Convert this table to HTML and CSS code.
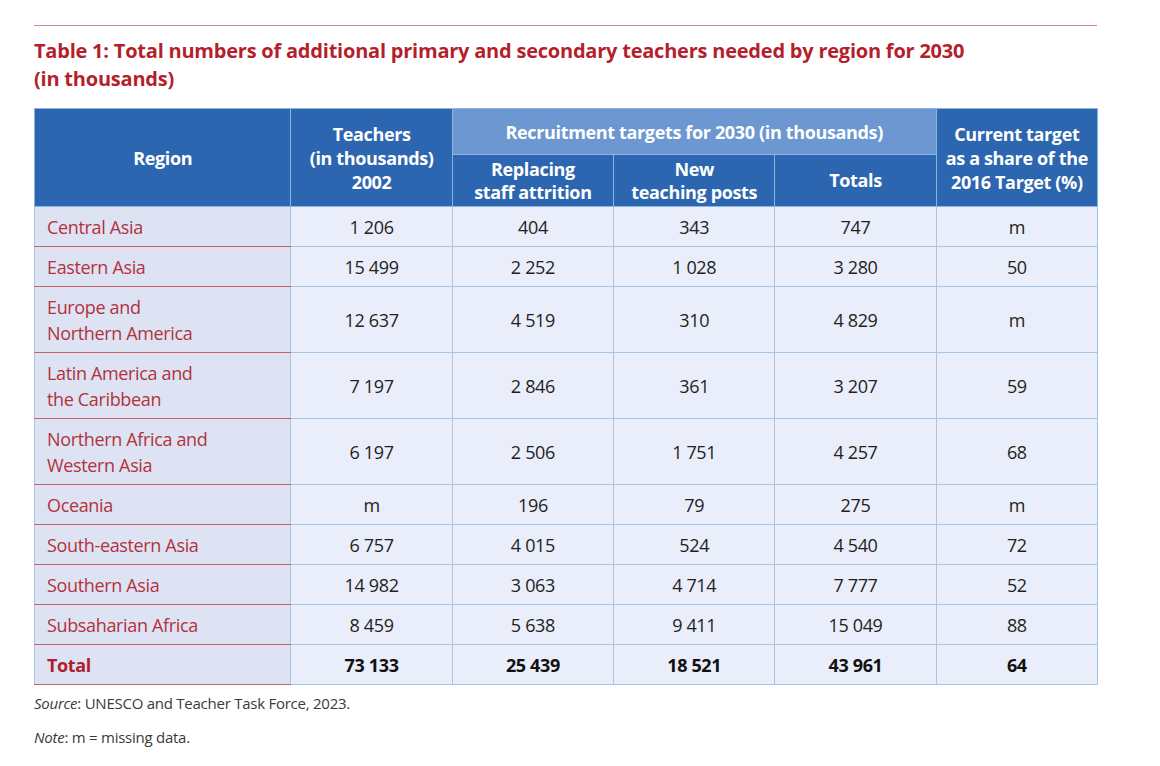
FILE: index.html
```html
<!DOCTYPE html>
<html lang="en">
<head>
<meta charset="utf-8">
<title>Table 1</title>
<link rel="stylesheet" href="styles.css">
</head>
<body>
<div class="page">
  <div class="rule"></div>
  <h1 class="title">Table 1: Total numbers of additional primary and secondary teachers needed by region for 2030<br>(in thousands)</h1>
  <table class="data">
    <colgroup>
      <col class="c-region"><col class="c-num"><col class="c-num"><col class="c-num"><col class="c-num"><col class="c-num">
    </colgroup>
    <thead>
      <tr class="h1">
        <th rowspan="2">Region</th>
        <th rowspan="2">Teachers<br>(in thousands)<br>2002</th>
        <th colspan="3" class="group">Recruitment targets for 2030 (in thousands)</th>
        <th rowspan="2">Current target<br>as a share of the<br>2016 Target (%)</th>
      </tr>
      <tr class="h2">
        <th>Replacing<br>staff attrition</th>
        <th>New<br>teaching posts</th>
        <th>Totals</th>
      </tr>
    </thead>
    <tbody>
      <tr><td class="region">Central Asia</td><td>1 206</td><td>404</td><td>343</td><td>747</td><td>m</td></tr>
      <tr><td class="region">Eastern Asia</td><td>15 499</td><td>2 252</td><td>1 028</td><td>3 280</td><td>50</td></tr>
      <tr><td class="region">Europe and<br>Northern America</td><td>12 637</td><td>4 519</td><td>310</td><td>4 829</td><td>m</td></tr>
      <tr><td class="region">Latin America and<br>the Caribbean</td><td>7 197</td><td>2 846</td><td>361</td><td>3 207</td><td>59</td></tr>
      <tr><td class="region">Northern Africa and<br>Western Asia</td><td>6 197</td><td>2 506</td><td>1 751</td><td>4 257</td><td>68</td></tr>
      <tr><td class="region">Oceania</td><td>m</td><td>196</td><td>79</td><td>275</td><td>m</td></tr>
      <tr><td class="region">South-eastern Asia</td><td>6 757</td><td>4 015</td><td>524</td><td>4 540</td><td>72</td></tr>
      <tr><td class="region">Southern Asia</td><td>14 982</td><td>3 063</td><td>4 714</td><td>7 777</td><td>52</td></tr>
      <tr><td class="region">Subsaharian Africa</td><td>8 459</td><td>5 638</td><td>9 411</td><td>15 049</td><td>88</td></tr>
      <tr class="total"><td class="region">Total</td><td>73 133</td><td>25 439</td><td>18 521</td><td>43 961</td><td>64</td></tr>
    </tbody>
  </table>
  <p class="note"><em>Source</em>: UNESCO and Teacher Task Force, 2023.</p>
  <p class="note"><em>Note</em>: m = missing data.</p>
</div>
</body>
</html>
```
FILE: styles.css
```css
html, body {
  margin: 0;
  padding: 0;
  background: #ffffff;
}
body {
  font-family: "Open Sans", "Noto Sans", "Liberation Sans", sans-serif;
  color: #231f20;
}
.page {
  width: 1063px;
  padding: 25px 0 0 34px;
}
.rule {
  height: 1px;
  background: #d9868c;
}
.title {
  margin: 11px 0 15px 0;
  font-size: 20px;
  line-height: 28px;
  font-weight: 700;
  color: #b41f2d;
  letter-spacing: -0.22px;
}
.data {
  width: 1064px;
  border-collapse: collapse;
  table-layout: fixed;
  font-size: 18px;
  letter-spacing: -0.35px;
}
.c-region { width: 256px; }
.c-num { width: 161px; }
.data th {
  background: #2d66b0;
  color: #ffffff;
  font-weight: 700;
  font-size: 18px;
  line-height: 24px;
  border: 1px solid #8db3e0;
  padding: 0 2px;
  text-align: center;
  letter-spacing: -0.35px;
}
.data th.group {
  background: #6c97d0;
}
.h1 th { height: 45px; }
.h2 th { height: 51px; line-height: 23px; }
.data td {
  background: #eaedfa;
  border: 1px solid #a4c4e8;
  text-align: center;
  padding: 7px 8px 6px 8px;
  line-height: 26px;
  height: 26px;
}
.data td.region {
  background: #dde3f3;
  color: #b3323d;
  text-align: left;
  padding-left: 12px;
  border-bottom-color: #c9606a;
  border-top-color: #c9606a;
}
.total td {
  font-weight: 700;
  color: #111111;
}
.total td.region {
  color: #b01e2b;
}
.note {
  margin: 5px 0 0 0;
  font-size: 15px;
  line-height: 26px;
  color: #3a3a3a;
  letter-spacing: -0.25px;
}
.note + .note {
  margin-top: 8px;
}
```
